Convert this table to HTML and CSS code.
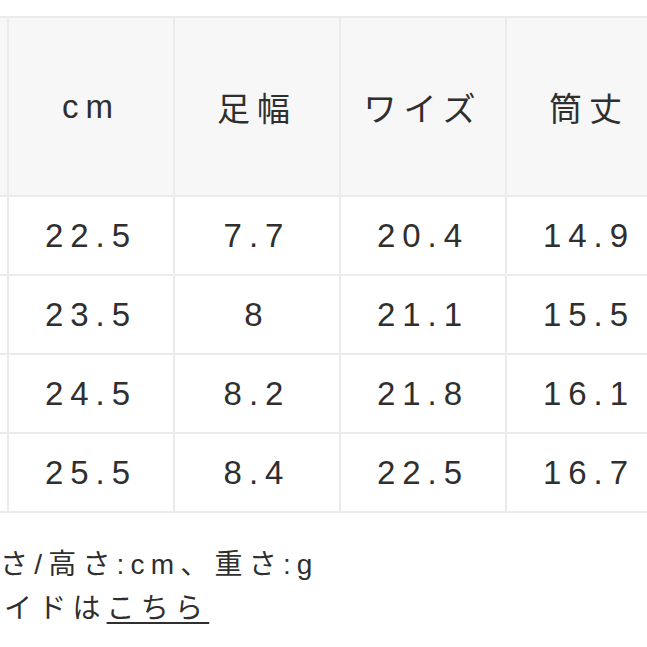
FILE: index.html
```html
<!DOCTYPE html>
<html lang="ja">
<head>
<meta charset="utf-8">
<title>サイズ表</title>
<link rel="stylesheet" href="styles.css">
</head>
<body>
<div class="page">
  <table class="size-table">
    <colgroup>
      <col class="col"><col class="col"><col class="col"><col class="col"><col class="col">
    </colgroup>
    <thead>
      <tr><th></th><th>cm</th><th>足幅</th><th>ワイズ</th><th>筒丈</th></tr>
    </thead>
    <tbody>
      <tr><td></td><td>22.5</td><td>7.7</td><td>20.4</td><td>14.9</td></tr>
      <tr><td></td><td>23.5</td><td>8</td><td>21.1</td><td>15.5</td></tr>
      <tr><td></td><td>24.5</td><td>8.2</td><td>21.8</td><td>16.1</td></tr>
      <tr><td></td><td>25.5</td><td>8.4</td><td>22.5</td><td>16.7</td></tr>
    </tbody>
  </table>
  <div class="notes">
    <p class="note">さ/高さ:cm、重さ:g</p>
    <p class="note note-guide">イドは<a class="link" href="#">こちら</a></p>
  </div>
</div>
</body>
</html>
```

FILE: styles.css
```css
html, body {
  margin: 0;
  padding: 0;
  background: #ffffff;
}

body {
  width: 647px;
  height: 647px;
  overflow: hidden;
  font-family: "Liberation Sans", "Noto Sans CJK JP", sans-serif;
  color: #333333;
}

.page {
  padding-top: 16px;
}

.size-table {
  margin-left: -159px;
  border-collapse: collapse;
  table-layout: fixed;
  width: 830px;
}

.size-table .col {
  width: 166px;
}

.size-table th,
.size-table td {
  border: 2px solid #ebebeb;
  padding: 0;
  text-align: center;
  vertical-align: middle;
  font-size: 33px;
  letter-spacing: 7px;
  font-weight: normal;
  color: #2f2f2f;
}

.size-table th {
  height: 177px;
  background: #f7f7f7;
}

.size-table td {
  height: 77px;
  background: #ffffff;
}

.notes {
  padding-top: 30px;
  font-size: 28px;
  letter-spacing: 6.2px;
  line-height: 44px;
  color: #2f2f2f;
}

.note {
  margin: 0;
  white-space: nowrap;
}

.note-guide {
  padding-left: 4px;
}

.link {
  color: #2f2f2f;
  text-decoration: underline;
  text-decoration-thickness: 2px;
  text-underline-offset: 4px;
}
```
